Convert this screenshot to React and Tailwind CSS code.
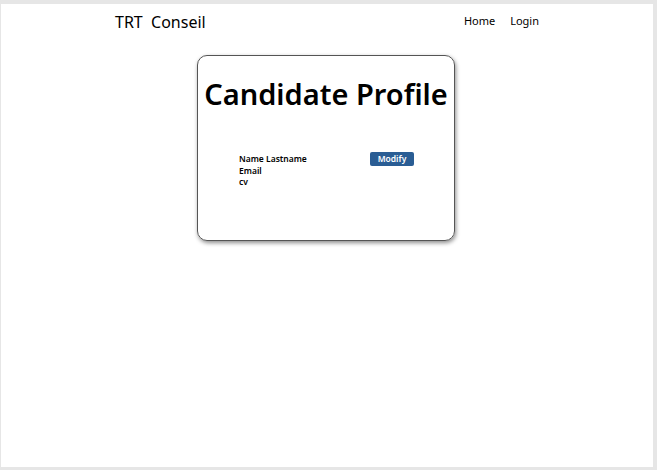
import React from 'react';

export default function App() {
  return (
    <div className="h-[470px] bg-[#e6e6e6] pt-[4px] pl-[1px] pr-[4px] pb-[3px]" style={{ fontFamily: '"Noto Sans", "Open Sans", sans-serif' }}>
      <div className="h-full bg-white">
        {/* Navbar */}
        <nav className="flex items-center justify-between pl-[114px] pr-[114px] h-[35px]">
          <span className="text-[16px] text-black whitespace-pre">TRT  Conseil</span>
          <div className="flex gap-[15px] text-[11px] text-black">
            <a href="#">Home</a>
            <a href="#">Login</a>
          </div>
        </nav>

        {/* Card */}
        <div className="mt-[16px] mx-auto w-[258px] h-[186px] border border-[#555] rounded-[10px] shadow-[1px_2px_4px_rgba(0,0,0,0.45)] translate-x-[-1px]">
          <h1 className="text-center text-[29px] font-semibold text-black mt-[16px] leading-[44px] whitespace-nowrap">Candidate Profile</h1>
          <div className="flex mt-[37px] pl-[41px]">
            <div className="flex flex-col text-[8.5px] font-semibold text-black leading-[11.5px] w-[131px]">
              <span>Name Lastname</span>
              <span>Email</span>
              <span>cv</span>
            </div>
            <button className="h-[14px] w-[44px] mt-[-1px] bg-[#2a5d94] text-white text-[8.5px] font-semibold rounded-[2px] leading-[14px]">Modify</button>
          </div>
        </div>
      </div>
    </div>
  );
}
